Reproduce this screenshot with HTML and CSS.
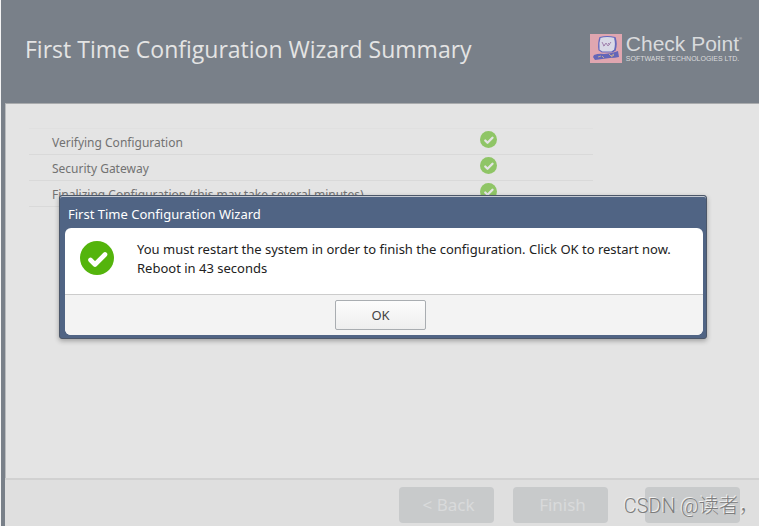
FILE: index.html
```html
<!DOCTYPE html>
<html lang="en">
<head>
<meta charset="utf-8">
<title>First Time Configuration Wizard</title>
<link rel="stylesheet" href="styles.css">
</head>
<body>
<svg class="defs" aria-hidden="true">
  <symbol id="check" viewBox="0 0 34 34">
    <circle cx="17" cy="17" r="17" fill="currentColor"/>
    <path class="tick" d="M10.500 19l4.500 4.500L25 13.500" fill="none" stroke-width="4.600" stroke-linecap="round" stroke-linejoin="round"/>
  </symbol>
</svg>
<div class="wizard">
  <header class="header">
    <h1 class="title">First Time Configuration Wizard Summary</h1>
    <div class="brand">
      <svg class="brand-mark" viewBox="0 0 32 29" aria-hidden="true">
        <rect width="32" height="29" fill="#e0a6b0"/>
        <path d="M10 3.500Q17 1.500 25 3.500Q26 10 25 16L22 18H12L9 16Q8 9 10 3.500Z" fill="#d9d9e6" stroke="#6668bd" stroke-width="1.200"/>
        <path d="M25 4Q27 10 25 16L22 18" fill="none" stroke="#6669ba" stroke-width="1.500"/>
        <path d="M12 8l2 4 2-3 2 3 3-4M13 12l2-1M18 9l2 2" fill="none" stroke="#a283ae" stroke-width="1"/>
        <path d="M4 21Q9 19 14 20Q21 20 28 17L29 23Q25 24 20 24Q12 25 5 26L3 23Z" fill="#6466b8"/>
        <path d="M8 23l3-1M12 22l2 2M19 20l2 2 3-2M21 23l3-2" fill="none" stroke="#c3aa91" stroke-width="1"/>
      </svg>
      <div class="brand-text">
        <span class="brand-name">Check Point<sup class="brand-reg">®</sup></span>
        <span class="brand-sub">SOFTWARE TECHNOLOGIES LTD.</span>
      </div>
    </div>
  </header>
  <main class="content">
    <table class="steps">
      <tbody>
        <tr><td class="step-name">Verifying Configuration</td><td><svg class="step-icon" role="img" aria-label="Done"><use href="#check"/></svg></td></tr>
        <tr><td class="step-name">Security Gateway</td><td><svg class="step-icon" role="img" aria-label="Done"><use href="#check"/></svg></td></tr>
        <tr><td class="step-name">Finalizing Configuration (this may take several minutes)</td><td><svg class="step-icon" role="img" aria-label="Done"><use href="#check"/></svg></td></tr>
      </tbody>
    </table>
  </main>
  <footer class="footer">
    <button class="nav-button" type="button" disabled>&lt; Back</button>
    <button class="nav-button" type="button" disabled>Finish</button>
    <button class="nav-button nav-cancel" type="button" disabled>Cancel</button>
  </footer>
</div>
<section class="dialog" role="dialog" aria-labelledby="dialog-title">
  <h2 class="dialog-title" id="dialog-title">First Time Configuration Wizard</h2>
  <div class="dialog-panel">
    <div class="dialog-body">
      <svg class="dialog-icon" aria-hidden="true"><use href="#check"/></svg>
      <p class="dialog-text">You must restart the system in order to finish the configuration. Click OK to restart now.<br>Reboot in 43 seconds</p>
    </div>
    <div class="dialog-actions"><button class="ok" type="button">OK</button></div>
  </div>
</section>
<div class="watermark">CSDN @读者，</div>
</body>
</html>
```

FILE: styles.css
```css
* { box-sizing: border-box; }

body {
  position: relative;
  margin: 0;
  min-height: 100vh;
  padding-left: 1px;
  overflow: hidden;
  background: #f4f4f4;
  font-family: "Noto Sans", "Open Sans", sans-serif;
}

.defs { position: absolute; width: 0; height: 0; }

.wizard {
  display: flex;
  flex-direction: column;
  height: 100vh;
  padding-left: 4px;
  background: #798089;
}

.header {
  display: flex;
  align-items: center;
  justify-content: space-between;
  height: 103px;
  padding: 0 17px 5px 20px;
}

.title {
  margin: 0;
  color: #e4e4e4;
  font-family: "Open Sans", sans-serif;
  font-size: 23px;
  font-weight: 400;
  white-space: nowrap;
}

.brand { display: flex; gap: 4px; color: #d9dbdd; }
.brand-mark { width: 32px; height: 29px; }
.brand-text { display: flex; flex-direction: column; font-family: "Liberation Sans", sans-serif; white-space: nowrap; }
.brand-name { font-size: 21px; line-height: 20px; }
.brand-reg { font-size: 4px; line-height: 4px; vertical-align: 11px; }
.brand-sub { font-size: 7px; line-height: 10px; }

.content {
  flex: 1;
  padding: 24px 23px;
  border-top: 1px solid #a9abad;
  border-left: 1px solid #b9bbbd;
  background: #e4e4e4;
}

.steps {
  width: 564px;
  border-collapse: collapse;
  color: #727272;
  font-size: 12px;
  line-height: 18px;
}
.steps tr { height: 26px; border-bottom: 1px solid #d9d9d9; }
.steps tr:first-child { border-top: 1px solid #e0e0e0; }
.steps td { padding: 0; vertical-align: middle; }
.steps .step-name { width: 451px; padding: 3px 0 0 23px; }
.step-icon { display: block; width: 17px; height: 17px; margin-bottom: 4px; color: #8fc566; stroke: #e4e4e4; }
#check circle { stroke: none; }

.footer {
  display: flex;
  gap: 19px;
  justify-content: flex-end;
  height: 48px;
  padding: 7px 19px 0 0;
  border-top: 2px solid #d1d1d1;
  background: #dfdfdf;
}

.nav-button {
  width: 95px;
  height: 36px;
  padding: 0 0 0 4px;
  border: 0;
  border-radius: 4px;
  background: #c8cacb;
  color: #d9dadb;
  font: 17px/36px "Noto Sans", sans-serif;
}
.nav-cancel { margin-left: 18px; color: #cfd1d2; }

.dialog {
  position: absolute;
  top: 195px;
  left: 59px;
  right: 52px;
  padding: 2px 3px 3px 5px;
  border: 1px solid #4c5769;
  border-radius: 3px;
  background: #506484;
  box-shadow: inset 0 1px 0 #c3c9d2, 0 2px 5px rgba(0, 0, 0, 0.3);
}

.dialog-title {
  margin: 0;
  padding: 2px 3px 0;
  color: #fff;
  font-size: 13px;
  font-weight: 400;
  line-height: 28px;
}

.dialog-panel { overflow: hidden; border-radius: 6px; background: #fff; }
.dialog-body { display: flex; gap: 23px; padding: 12px 15px 16px; }
.dialog-icon { flex: none; width: 34px; height: 34px; margin-top: 1px; color: #54b40c; stroke: #fff; }
.dialog-text { margin: 0; color: #222; font-size: 13px; line-height: 19px; white-space: nowrap; }
.dialog-actions {
  display: flex;
  justify-content: center;
  padding: 5px 0;
  border-top: 1px solid #ccc;
  background: #f3f3f3;
}

.ok {
  width: 91px;
  height: 30px;
  margin-right: 7px;
  padding: 0;
  border: 1px solid #a9adb1;
  border-radius: 2px;
  background: linear-gradient(#fcfcfc, #eee);
  color: #444;
  font: 13px/28px "Noto Sans", sans-serif;
}

.watermark {
  position: absolute;
  right: 0;
  bottom: 7px;
  color: #7d7d7d;
  font: 300 20px/26px Roboto, "Noto Sans CJK SC", sans-serif;
  text-shadow: -1px -1px 0 #f2f2f2;
  white-space: nowrap;
}
```
